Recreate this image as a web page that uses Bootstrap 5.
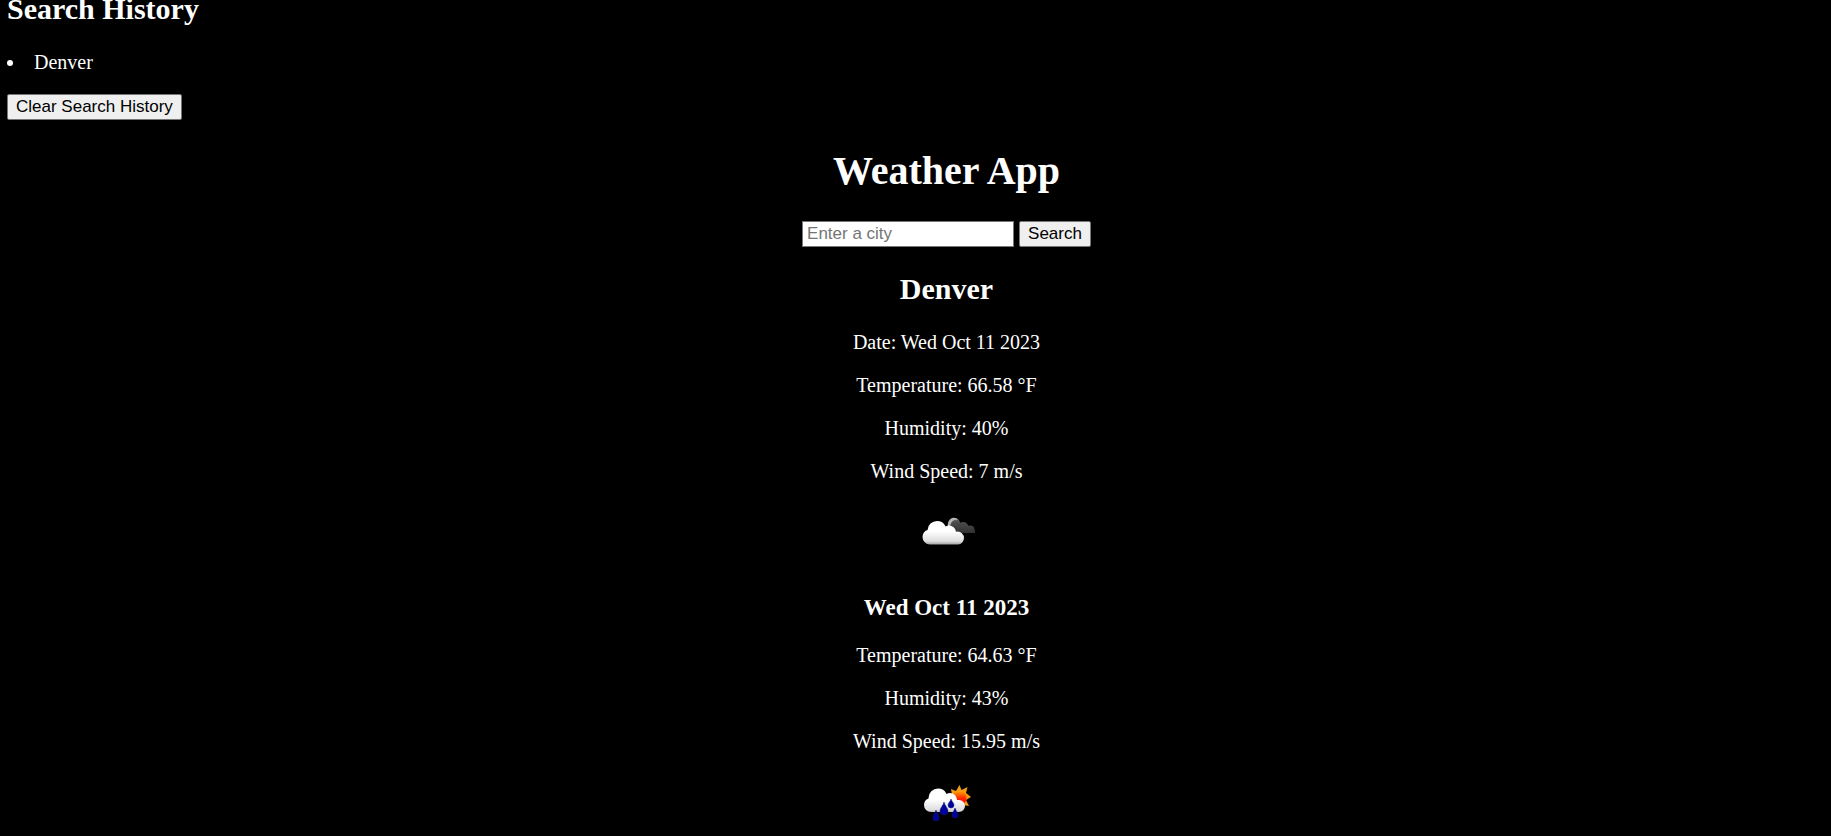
<!DOCTYPE html>
<html lang="en">
<head>
<meta charset="utf-8">
<meta name="viewport" content="width=device-width, initial-scale=1">
<title>Weather App</title>
<link href="https://cdn.jsdelivr.net/npm/bootstrap@5.3.0/dist/css/bootstrap.min.css" rel="stylesheet">
<style>
  body { font: 20px/23px "Liberation Serif", "Times New Roman", serif; }
  h1, h2, h3 { font-weight: 700; }
  h1 { font-size: 40px; line-height: 46px; margin: 28px 0 27px; }
  h2 { font-size: 30px; line-height: 34px; margin: 25px 0; }
  h3 { font-size: 23px; line-height: 27px; margin: 23px 0; }
  p, .history-list { margin-bottom: 20px; }
  .history-list { list-style-position: inside; }
  .history { padding-left: 7px; margin-top: -8px; }
  .history h2 { margin-top: 0; }
  .weather { padding-left: 62px; }
  .plain-btn, .city-input {
    font: 17px/20px "Liberation Sans", Arial, sans-serif;
    height: 26px; border: 1px solid #767676; color: #000;
  }
  .plain-btn { background: #efefef; border-radius: 2px; padding: 0 8px; }
  .city-input { background: #fff; width: 212px; padding: 0 4px; }
  .city-input::placeholder { color: #757575; }
  .search-row { gap: 5px; }
  .report { padding-bottom: 6px; }
  .sky { width: 62px; height: 62px; }
</style>
</head>
<body class="bg-black text-white overflow-hidden">
<section class="history">
  <h2>Search History</h2>
  <ul class="history-list ps-0">
    <li>Denver</li>
  </ul>
  <button type="button" class="plain-btn d-block">Clear Search History</button>
</section>

<main class="weather text-center">
  <h1>Weather App</h1>
  <form class="search-row d-flex justify-content-center" onsubmit="return false">
    <input type="text" class="city-input" placeholder="Enter a city" aria-label="City">
    <button type="submit" class="plain-btn">Search</button>
  </form>

  <section class="report">
    <h2>Denver</h2>
    <p>Date: Wed Oct 11 2023</p>
    <p>Temperature: 66.58 °F</p>
    <p>Humidity: 40%</p>
    <p>Wind Speed: 7 m/s</p>
    <svg class="sky d-block mx-auto" viewBox="0 0 62 62" role="img" aria-label="Broken clouds">
      <defs>
        <linearGradient id="white" x1="0" y1="0" x2="0" y2="1"><stop offset=".45" stop-color="#fff"/><stop offset=".85" stop-color="#ddd"/><stop offset="1" stop-color="#999"/></linearGradient>
        <linearGradient id="dark" x1="0" y1="0" x2="0" y2="1"><stop offset="0" stop-color="#777"/><stop offset=".35" stop-color="#4c4c4c"/><stop offset="1" stop-color="#303030"/></linearGradient>
        <clipPath id="cloud">
          <circle cx="21" cy="27.500" r="9.500"/><circle cx="33" cy="29.500" r="7"/>
          <circle cx="14" cy="34" r="7.500"/><circle cx="41.500" cy="35" r="6.500"/>
          <rect x="14" y="29" width="28" height="12.500"/>
        </clipPath>
        <clipPath id="back">
          <circle cx="38" cy="21.500" r="6.500"/><circle cx="47" cy="24.500" r="5.500"/>
          <circle cx="54" cy="27" r="4.500"/><path d="M37 22h14l8 5v3H37Z"/>
        </clipPath>
      </defs>
      <rect x="30" y="14" width="30" height="16" fill="url(#dark)" clip-path="url(#back)"/>
      <path d="M32 24c-1-10 8-11 10-7-4-1-7 1-8 7Z" fill="#b5b5b5"/>
      <rect x="6" y="17" width="43" height="25" fill="url(#white)" clip-path="url(#cloud)"/>
    </svg>
  </section>

  <section class="report">
    <h3>Wed Oct 11 2023</h3>
    <p>Temperature: 64.63 °F</p>
    <p>Humidity: 43%</p>
    <p>Wind Speed: 15.95 m/s</p>
    <svg class="sky d-block mx-auto" viewBox="0 0 62 62" role="img" aria-label="Rain with sun">
      <defs>
        <linearGradient id="sun" x1="0" y1="0" x2="0" y2="1"><stop offset="0" stop-color="#ffa500"/><stop offset=".5" stop-color="#ff2a00"/><stop offset="1" stop-color="#f00"/></linearGradient>
        <clipPath id="raincloud">
          <circle cx="22" cy="25" r="9.500"/><circle cx="34" cy="27" r="7"/>
          <circle cx="15" cy="32" r="7"/><circle cx="43" cy="33" r="6"/>
          <rect x="15" y="27" width="28" height="12"/>
        </clipPath>
      </defs>
      <path d="m43.500 12 2 5 6-3-1.500 6 5 4-5 3 3 6-6-1-4 4-5-3-5 0 1-5-3-4 5-2-1-6 5 2Z" fill="#f59a14"/>
      <circle cx="43.500" cy="25" r="7" fill="url(#sun)"/>
      <rect x="7" y="15" width="43" height="26" fill="url(#white)" clip-path="url(#raincloud)"/>
      <g fill="#00009c" stroke="#0b1a70" stroke-width=".5">
        <path d="M28 29c1 4 4 6 4 9a4 4 0 0 1-8 0c0-3 3-5 4-9Z"/>
        <path d="M20 37c1 4 3 5 3 8a3 3 0 0 1-6 0c0-3 2-4 3-8Z"/>
        <path d="M35 26c1 3 3 4 3 6a3 3 0 0 1-6 0c0-2 2-3 3-6Z"/>
        <path d="M39 35c1 3 3 5 3 7a3 3 0 0 1-6 0c0-2 2-4 3-7Z"/>
      </g>
    </svg>
  </section>
</main>
<script src="https://cdn.jsdelivr.net/npm/bootstrap@5.3.0/dist/js/bootstrap.bundle.min.js"></script>
</body>
</html>
